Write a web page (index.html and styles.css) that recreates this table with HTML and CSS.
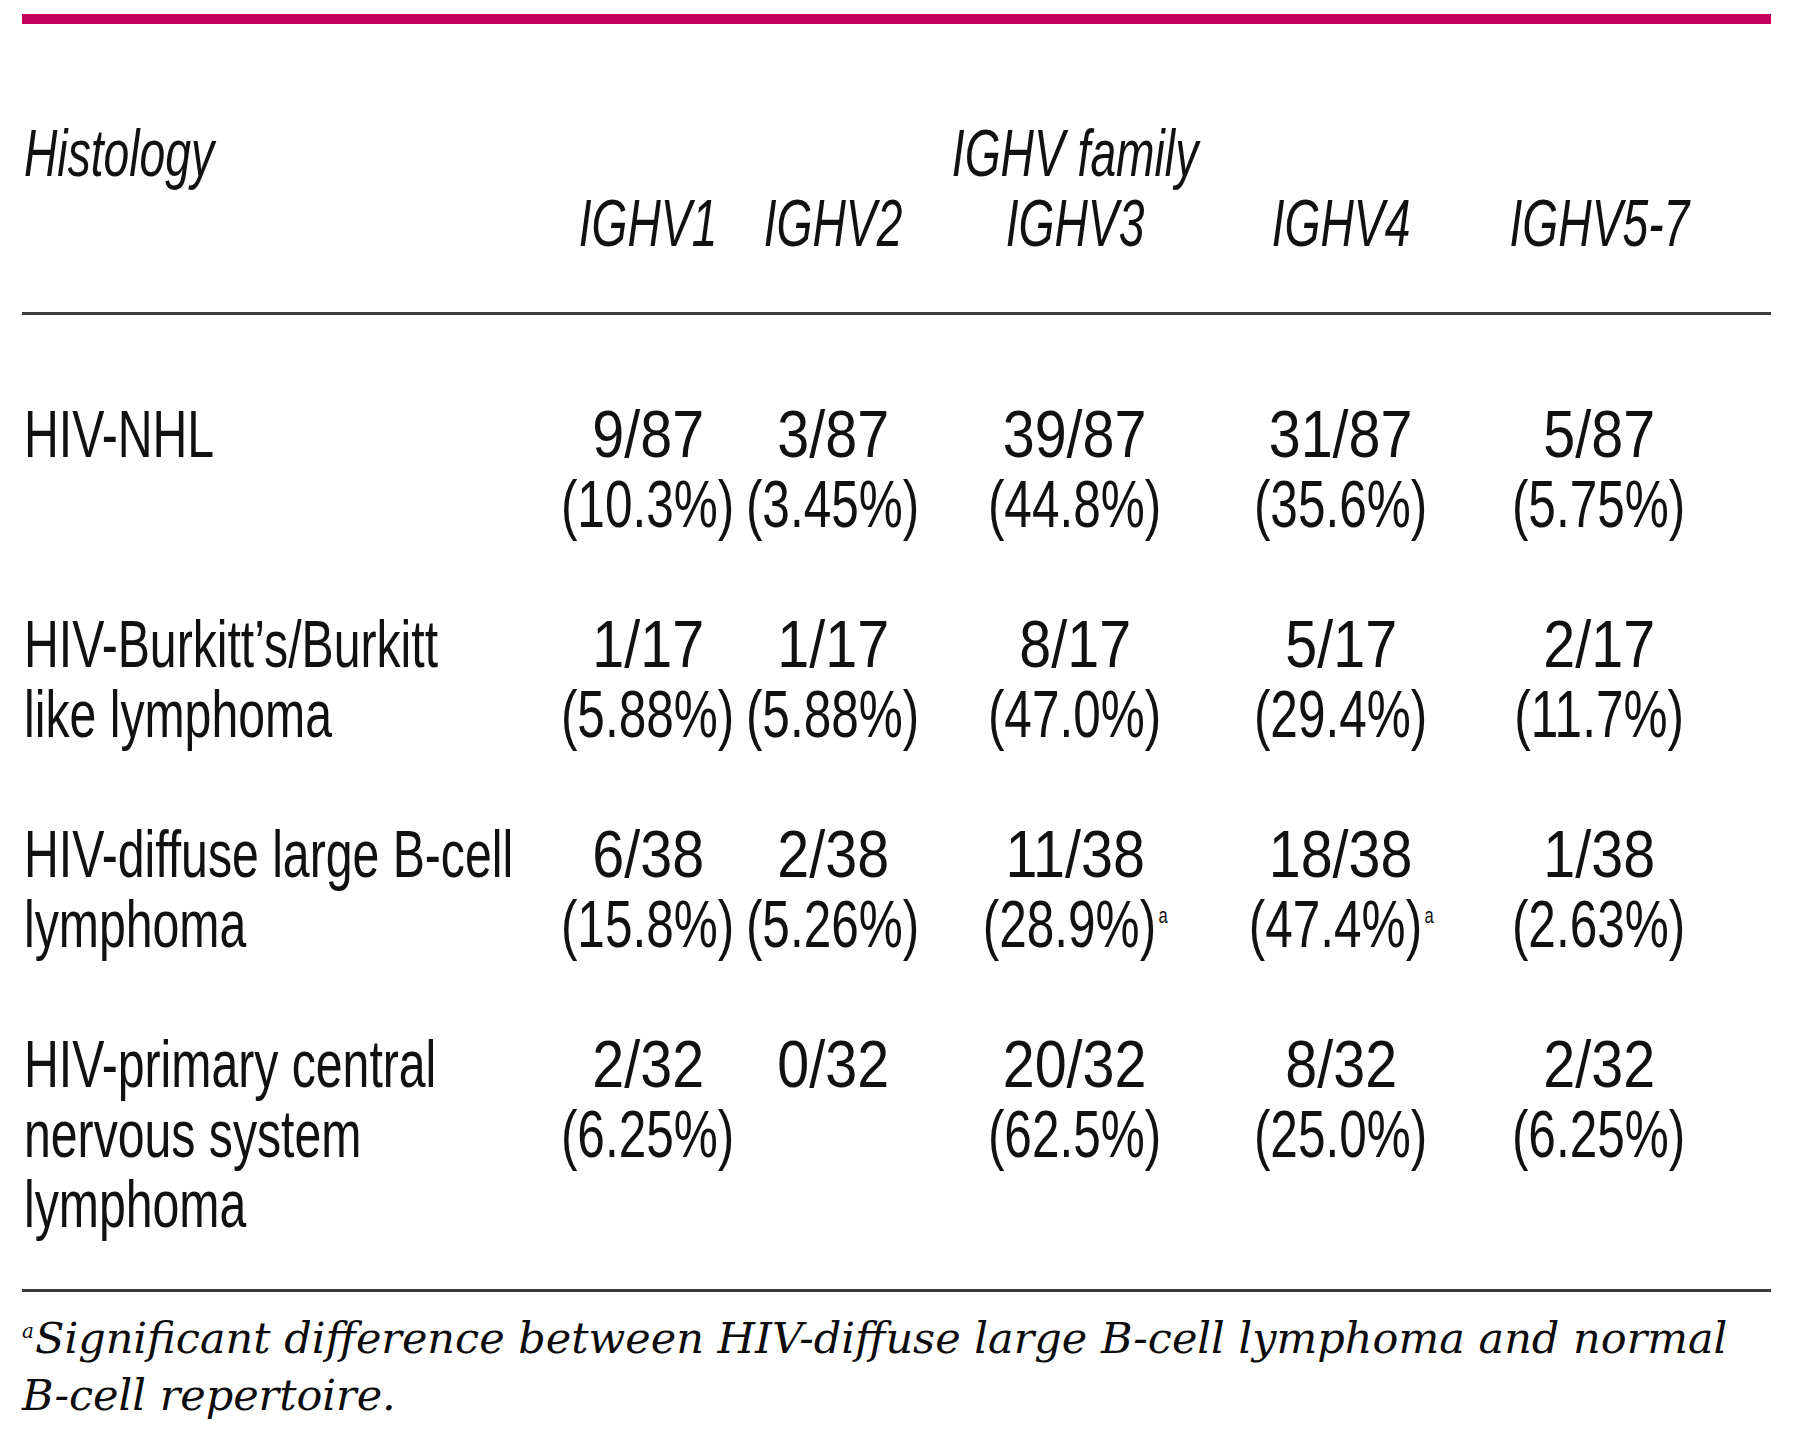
FILE: index.html
```html
<!DOCTYPE html>
<html lang="en">
<head>
<meta charset="utf-8">
<title>IGHV family usage by histology</title>
<link rel="stylesheet" href="styles.css">
</head>
<body>
<div class="sheet">
  <div class="topbar"></div>

  <div class="grid head">
    <div class="cell first"><span class="hd">Histology</span></div>
    <div class="cell"></div>
    <div class="cell"></div>
    <div class="cell"><span class="hd">IGHV family</span></div>
    <div class="cell"></div>
    <div class="cell"></div>

    <div class="cell first"></div>
    <div class="cell"><span class="hd">IGHV1</span></div>
    <div class="cell"><span class="hd">IGHV2</span></div>
    <div class="cell"><span class="hd">IGHV3</span></div>
    <div class="cell"><span class="hd">IGHV4</span></div>
    <div class="cell"><span class="hd">IGHV5-7</span></div>
  </div>

  <div class="rule"></div>

  <div class="grid body">
    <div class="cell first"><span class="lab">HIV-NHL</span></div>
    <div class="cell"><span class="frac">9/87</span><span class="pct">(10.3%)</span></div>
    <div class="cell"><span class="frac">3/87</span><span class="pct">(3.45%)</span></div>
    <div class="cell"><span class="frac">39/87</span><span class="pct">(44.8%)</span></div>
    <div class="cell"><span class="frac">31/87</span><span class="pct">(35.6%)</span></div>
    <div class="cell"><span class="frac">5/87</span><span class="pct">(5.75%)</span></div>

    <div class="cell first"><span class="lab">HIV-Burkitt’s/Burkitt</span><span class="lab">like lymphoma</span></div>
    <div class="cell"><span class="frac">1/17</span><span class="pct">(5.88%)</span></div>
    <div class="cell"><span class="frac">1/17</span><span class="pct">(5.88%)</span></div>
    <div class="cell"><span class="frac">8/17</span><span class="pct">(47.0%)</span></div>
    <div class="cell"><span class="frac">5/17</span><span class="pct">(29.4%)</span></div>
    <div class="cell"><span class="frac">2/17</span><span class="pct">(11.7%)</span></div>

    <div class="cell first"><span class="lab">HIV-diffuse large B-cell</span><span class="lab">lymphoma</span></div>
    <div class="cell"><span class="frac">6/38</span><span class="pct">(15.8%)</span></div>
    <div class="cell"><span class="frac">2/38</span><span class="pct">(5.26%)</span></div>
    <div class="cell"><span class="frac">11/38</span><span class="pct">(28.9%)<sup class="mark">a</sup></span></div>
    <div class="cell"><span class="frac">18/38</span><span class="pct">(47.4%)<sup class="mark">a</sup></span></div>
    <div class="cell"><span class="frac">1/38</span><span class="pct">(2.63%)</span></div>

    <div class="cell first"><span class="lab">HIV-primary central</span><span class="lab">nervous system</span><span class="lab">lymphoma</span></div>
    <div class="cell"><span class="frac">2/32</span><span class="pct">(6.25%)</span></div>
    <div class="cell"><span class="frac">0/32</span></div>
    <div class="cell"><span class="frac">20/32</span><span class="pct">(62.5%)</span></div>
    <div class="cell"><span class="frac">8/32</span><span class="pct">(25.0%)</span></div>
    <div class="cell"><span class="frac">2/32</span><span class="pct">(6.25%)</span></div>
  </div>

  <div class="rule bottom"></div>

  <p class="footnote"><sup class="fmark">a</sup>Significant difference between HIV-diffuse large B-cell lymphoma and normal B-cell repertoire.</p>
</div>
</body>
</html>
```
FILE: styles.css
```css
html, body {
  margin: 0;
  padding: 0;
  background: #ffffff;
}

.sheet {
  width: 1749px;
  margin-left: 22px;
  padding-top: 14px;
  color: #111111;
}

.topbar {
  height: 10px;
  background: #c6005f;
}

.grid {
  display: grid;
  grid-template-columns: 534px 184px 186px 298px 234px 282px;
  font-family: "Liberation Sans", Arial, sans-serif;
  font-size: 66px;
  line-height: 70px;
}

.head {
  margin-top: 94px;
  grid-auto-rows: 70px;
}

.body {
  margin-top: 84px;
  row-gap: 70px;
}

.cell {
  display: flex;
  flex-direction: column;
  align-items: center;
  white-space: nowrap;
}

.cell.first {
  align-items: flex-start;
  padding-left: 2px;
}

.hd,
.lab,
.frac,
.pct {
  display: block;
  height: 70px;
  transform-origin: center top;
}

.first .hd,
.first .lab {
  transform-origin: left top;
}

.hd {
  font-style: italic;
  transform: scaleX(0.70);
}

.lab {
  transform: scaleX(0.73);
}

.frac {
  transform: scaleX(0.87);
}

.pct {
  transform: scaleX(0.75);
}

.mark {
  font-size: 22px;
  line-height: 0;
  vertical-align: 24px;
  margin-left: 3px;
}

.rule {
  height: 3px;
  background: #3c3c3c;
  margin-top: 54px;
}

.rule.bottom {
  margin-top: 50px;
}

.footnote {
  margin: 18px 0 0 0;
  font-family: "DejaVu Serif", "Liberation Serif", serif;
  font-style: italic;
  font-size: 43px;
  line-height: 57px;
  color: #0c0c0c;
}

.fmark {
  font-size: 20px;
  line-height: 0;
  vertical-align: 15px;
  margin-right: 1px;
}
```
